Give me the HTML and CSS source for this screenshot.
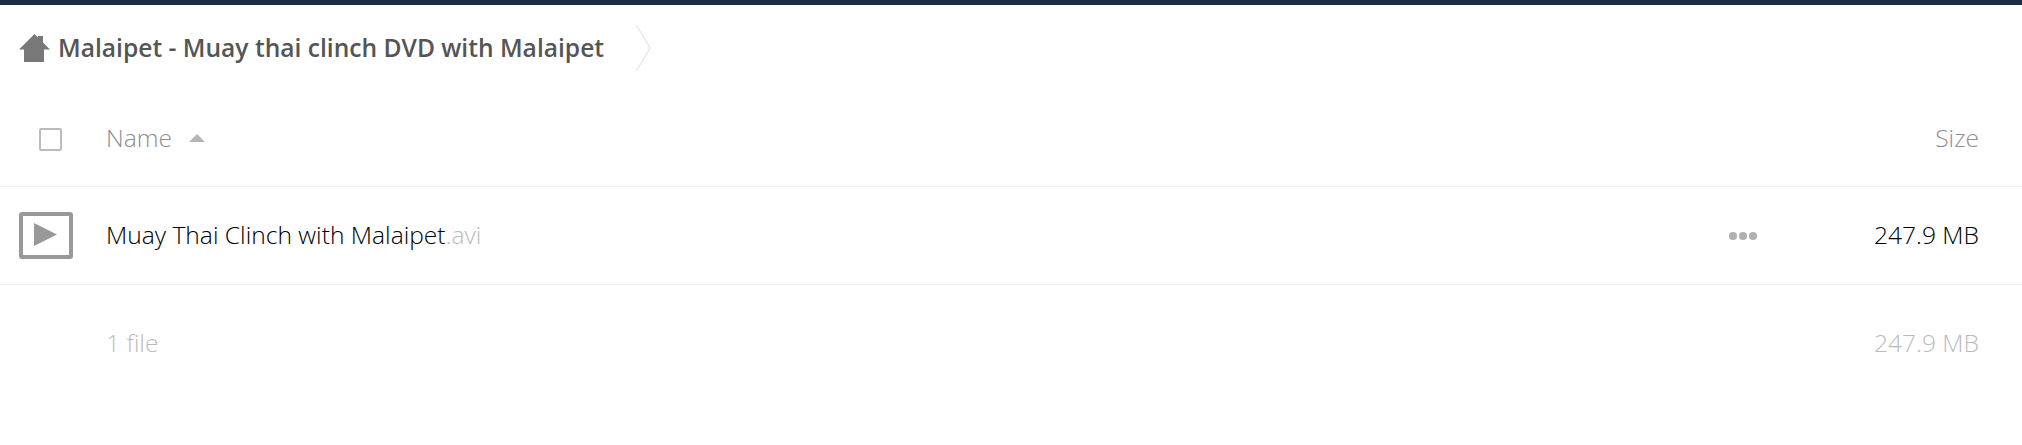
FILE: index.html
```html
<!DOCTYPE html>
<html lang="en">
<head>
    <meta charset="UTF-8">
    <meta name="viewport" content="width=device-width, initial-scale=1.0">
    <title>Files</title>
    <link rel="stylesheet" href="styles.css">
</head>
<body>
    <div class="top-bar"></div>

    <div class="breadcrumb">
        <svg class="home-icon" viewBox="0 0 31 28" xmlns="http://www.w3.org/2000/svg">
            <path d="M15.5 0L19 3.5V2H24V8.5L31 15.500H25V28H5V15.500H0Z" fill="#787878"/>
        </svg>
        <span class="crumb-title">Malaipet - Muay thai clinch DVD with Malaipet</span>
        <svg class="crumb-chevron" viewBox="0 0 15 46" fill="none" xmlns="http://www.w3.org/2000/svg">
            <path d="M0.500 0L14 23L0.500 46" stroke="#dcdcdc" stroke-width="1"/>
        </svg>
    </div>

    <div class="file-head">
        <div class="col-check"><span class="checkbox"></span></div>
        <div class="col-name">Name <span class="sort-arrow"></span></div>
        <div class="col-size">Size</div>
    </div>

    <div class="file-row">
        <div class="col-check">
            <svg class="video-icon" viewBox="0 0 54 47" xmlns="http://www.w3.org/2000/svg">
                <rect x="2" y="2" width="50" height="43" rx="1" fill="none" stroke="#999" stroke-width="4"/>
                <path d="M15 11L38 22.500L15 34Z" fill="#999"/>
            </svg>
        </div>
        <div class="col-name">Muay Thai Clinch with Malaipet<span class="extension">.avi</span></div>
        <div class="actions"><i></i><i></i><i></i></div>
        <div class="col-size">247.9 MB</div>
    </div>

    <div class="file-summary">
        <div class="col-check"></div>
        <div class="col-name">1 file</div>
        <div class="col-size">247.9 MB</div>
    </div>
</body>
</html>
```

FILE: styles.css
```css
* {
    margin: 0;
    padding: 0;
    box-sizing: border-box;
}

body {
    font-family: 'Open Sans', sans-serif;
    font-weight: 300;
    font-size: 24.6px;
    background: white;
    color: #000;
}

.top-bar {
    height: 5px;
    background: #1d2d44;
}

.breadcrumb {
    display: flex;
    align-items: center;
    height: 86px;
    padding-left: 19px;
}

.home-icon {
    width: 31px;
    height: 28px;
    margin-right: 8px;
}

.crumb-title {
    color: #555;
    font-size: 24.6px;
    font-weight: 600;
    padding-bottom: 2px;
}

.crumb-chevron {
    width: 15px;
    height: 46px;
    margin-left: 32px;
}

.file-head,
.file-row,
.file-summary {
    display: flex;
    align-items: center;
    padding-right: 43px;
}

.file-head {
    height: 96px;
    color: #8e8e8e;
    border-bottom: 1px solid #eee;
}

.file-row {
    height: 98px;
    border-bottom: 1px solid #eee;
}

.file-summary {
    height: 118px;
    padding-bottom: 1px;
    color: #bbb;
}

.col-check {
    width: 106px;
    flex-shrink: 0;
    padding-left: 19px;
    display: flex;
    align-items: center;
}

.col-name {
    flex: 1;
    display: flex;
    align-items: center;
    padding-bottom: 2px;
}

.col-size {
    margin-left: auto;
    text-align: right;
    padding-bottom: 2px;
}

.checkbox {
    display: block;
    width: 23px;
    height: 23px;
    margin: 2px 0 0 20px;
    border: 2px solid #bbb;
    border-radius: 2px;
}

.sort-arrow {
    width: 0;
    height: 0;
    margin-left: 17px;
    border-left: 8px solid transparent;
    border-right: 8px solid transparent;
    border-bottom: 8px solid #b5b5b5;
}

.video-icon {
    width: 54px;
    height: 47px;
}

.extension {
    color: #bbb;
}

.actions {
    display: flex;
    gap: 2px;
    margin-right: 117px;
}

.actions i {
    width: 8px;
    height: 8px;
    border-radius: 50%;
    background: #b0b0b0;
}
```
